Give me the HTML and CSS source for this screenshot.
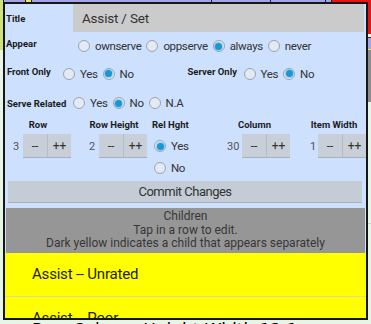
FILE: index.html
```html
<!doctype html>
<html lang="en">

<head>
    <meta charset="utf-8">
    <title>Assist / Set</title>
    <link rel="stylesheet" href="styles.css">
</head>

<body>
    <!-- screen underneath the dialog -->
    <div class="screen">
        <div class="strip-top">
            <div class="c-lime"></div>
            <div class="c-purple"></div>
            <div class="c-yellow"></div>
            <div class="c-purple"></div>
            <div class="c-purple"></div>
            <div class="c-purple"></div>
            <div class="c-purple"></div>
            <div class="c-red"></div>
        </div>
        <div class="under">
            <div class="edge-left">
                <div class="lime-tall"></div>
            </div>
            <div class="under-main">
                <p class="under-text">Row Column Height Width 12 1</p>
            </div>
            <div class="edge-right">
                <div class="e-red"></div>
                <div class="e-box"></div>
                <div class="e-yellow"></div>
                <div class="e-grey"></div>
                <div class="e-line"></div>
            </div>
        </div>
    </div>

    <div class="dialog">
        <div class="row title-row">
            <span class="lbl lbl-title">Title</span>
            <div class="title-field">Assist / Set</div>
        </div>

        <div class="row appear-row">
            <span class="lbl lbl-appear">Appear</span>
            <label class="radio"><span class="dot"></span>ownserve</label>
            <label class="radio"><span class="dot"></span>oppserve</label>
            <label class="radio"><span class="dot on"></span>always</label>
            <label class="radio"><span class="dot"></span>never</label>
        </div>

        <div class="row front-row">
            <div class="half">
                <span class="lbl lbl-front">Front Only</span>
                <label class="radio"><span class="dot"></span>Yes</label>
                <label class="radio"><span class="dot on"></span>No</label>
            </div>
            <div class="half">
                <span class="lbl lbl-server">Server Only</span>
                <label class="radio"><span class="dot"></span>Yes</label>
                <label class="radio"><span class="dot on"></span>No</label>
            </div>
        </div>

        <div class="row serve-row">
            <span class="lbl lbl-serve">Serve Related</span>
            <label class="radio"><span class="dot"></span>Yes</label>
            <label class="radio"><span class="dot on"></span>No</label>
            <label class="radio"><span class="dot"></span>N.A</label>
        </div>

        <div class="steppers">
            <div class="col col-1">
                <div class="col-lbl">Row</div>
                <div class="stepper">
                    <span class="val">3</span>
                    <div class="btns"><button class="btn">--</button><button class="btn">++</button></div>
                </div>
            </div>
            <div class="col col-2">
                <div class="col-lbl">Row Height</div>
                <div class="stepper">
                    <span class="val">2</span>
                    <div class="btns"><button class="btn">--</button><button class="btn">++</button></div>
                </div>
            </div>
            <div class="col col-rel">
                <div class="col-lbl">Rel Hght</div>
                <label class="radio rel-yes"><span class="dot on"></span>Yes</label>
                <label class="radio rel-no"><span class="dot"></span>No</label>
            </div>
            <div class="col col-4">
                <div class="col-lbl">Column</div>
                <div class="stepper">
                    <span class="val">30</span>
                    <div class="btns"><button class="btn">--</button><button class="btn">++</button></div>
                </div>
            </div>
            <div class="col col-5">
                <div class="col-lbl">Item Width</div>
                <div class="stepper">
                    <span class="val">1</span>
                    <div class="btns"><button class="btn">--</button><button class="btn">++</button></div>
                </div>
            </div>
        </div>

        <button class="commit">Commit Changes</button>

        <div class="children">
            <div>Children</div>
            <div>Tap in a row to edit.</div>
            <div>Dark yellow indicates a child that appears separately</div>
        </div>

        <div class="child">Assist -- Unrated</div>
        <div class="child">Assist -- Poor</div>
    </div>
</body>

</html>
```

FILE: styles.css
```css
body {
    margin: 0;
    font-family: Roboto, "Noto Sans", sans-serif;
}

/* underlying screen */
.screen {
    width: 371px;
    height: 324px;
    background-color: #e7f5e7;
    overflow: hidden;
}

.strip-top {
    display: grid;
    grid-template-columns: 3px 21px 5px 179px 58px 54px 5px 1fr;
    column-gap: 1px;
    height: 2px;
    background-color: #222;
}

.c-lime { background-color: #cde37a; }
.c-purple { background-color: #a4a4e6; }
.c-yellow { background-color: #e6ec6a; }
.c-red { background-color: #ee1111; }

.under {
    display: flex;
    height: 322px;
}

.edge-left {
    width: 3px;
}

.lime-tall {
    height: 48px;
    background-color: #cde37a;
}

.under-main {
    flex: 1;
    overflow: hidden;
}

.under-text {
    margin: 318px 0 0 29px;
    font-family: "DejaVu Sans", sans-serif;
    font-size: 17px;
    line-height: 20px;
    color: #000;
    white-space: nowrap;
}

.edge-right {
    width: 3px;
}

.e-red {
    height: 32px;
    background-color: #ee1111;
}

.e-box {
    height: 11px;
    margin-top: 3px;
    background-color: #a4a4e6;
    border-top: 1px solid #333;
}

.e-yellow {
    height: 1px;
    background-color: #e6ec3a;
}

.e-grey {
    height: 52px;
    background-color: #8c8c8c;
}

.e-line {
    height: 1px;
    margin-top: 121px;
    background-color: #c8d8c8;
}

/* dialog */
.dialog {
    position: absolute;
    left: 3px;
    top: 2px;
    width: 361px;
    height: 314px;
    border: 2px solid #161616;
    background-color: #cde0fe;
    overflow: hidden;
}

.row {
    display: flex;
    align-items: center;
}

.lbl {
    flex: none;
    box-sizing: border-box;
    font-size: 9.5px;
    font-weight: bold;
    color: #1c1c1c;
}

.title-row {
    height: 28px;
}

.lbl-title {
    width: 68px;
    padding-left: 1px;
}

.title-field {
    flex: 1;
    height: 28px;
    margin-right: 2px;
    padding-left: 9px;
    line-height: 28px;
    background-color: #cbcbcb;
    font-size: 13.5px;
    letter-spacing: -0.2px;
    color: #333;
}

.appear-row {
    height: 28px;
}

.lbl-appear {
    width: 73px;
    padding-left: 1px;
    margin-bottom: 6px;
}

.front-row {
    height: 27px;
}

.half {
    display: flex;
    align-items: center;
    width: 181px;
}

.lbl-front,
.lbl-server {
    width: 58px;
    padding-left: 2px;
    margin-bottom: 4px;
}

.serve-row {
    height: 32px;
}

.lbl-serve {
    width: 68px;
    padding-left: 2px;
}

/* radio buttons */
.radio {
    display: inline-flex;
    align-items: center;
    margin-right: 5px;
    font-size: 11.5px;
    letter-spacing: -0.35px;
    color: #333;
    white-space: nowrap;
}

.dot {
    position: relative;
    flex: none;
    box-sizing: border-box;
    width: 12px;
    height: 12px;
    margin-right: 5px;
    border: 1px solid #9ea3aa;
    border-radius: 50%;
    background-color: #e3eaf4;
}

.dot.on::after {
    content: "";
    position: absolute;
    left: 1.5px;
    top: 1.5px;
    width: 7px;
    height: 7px;
    border-radius: 50%;
    background-color: #1a98d5;
    box-shadow: 0 0 1px 1px rgba(90, 180, 230, 0.6);
}

/* steppers */
.steppers {
    display: flex;
    align-items: flex-start;
    height: 62px;
}

.col {
    flex: none;
}

.col-1 { margin-left: 8px; width: 58px; }
.col-2 { margin-left: 18px; width: 58px; }
.col-rel { margin-left: 5px; width: 40px; }
.col-4 { margin-left: 35px; width: 63px; }
.col-5 { margin-left: 20px; width: 56px; }

.col-lbl {
    height: 12px;
    padding-right: 8px;
    margin-bottom: 3px;
    line-height: 12px;
    font-size: 9.5px;
    font-weight: bold;
    color: #1c1c1c;
    text-align: center;
    white-space: nowrap;
}

.col-rel .col-lbl {
    padding-right: 0;
    text-align: left;
}

.stepper {
    display: flex;
    align-items: center;
    justify-content: space-between;
    height: 24px;
}

.val {
    font-size: 11px;
    color: #555;
}

.btns {
    display: flex;
}

.btn {
    width: 24px;
    height: 24px;
    padding: 0;
    border: 0;
    border-bottom: 1px solid #a7afb9;
    background-color: #c8cfd8;
    font-family: Roboto, sans-serif;
    font-size: 12px;
    color: #333;
}

.btn + .btn {
    border-left: 1px solid #b5bcc5;
}

.rel-yes {
    display: flex;
    height: 24px;
    margin-left: 2px;
}

.rel-no {
    display: flex;
    height: 19px;
    margin-left: 2px;
}

/* commit + children */
.commit {
    display: block;
    width: 354px;
    height: 22px;
    margin: 0 0 0 3px;
    padding: 0;
    border: 0;
    border-bottom: 1px solid #a9b1bb;
    background-color: #c4ccd6;
    font-family: Roboto, sans-serif;
    font-size: 13px;
    letter-spacing: -0.5px;
    color: #333;
}

.children {
    box-sizing: border-box;
    height: 45px;
    margin: 5px 1px 0;
    padding-top: 2px;
    background-color: #969696;
    font-size: 12px;
    line-height: 13.5px;
    color: #363636;
    text-align: center;
}

.child {
    box-sizing: border-box;
    height: 44px;
    padding-left: 27px;
    line-height: 43px;
    border-bottom: 1px solid #dcdc98;
    background-color: #ffff00;
    font-size: 15px;
    letter-spacing: -0.2px;
    color: #222;
}
```
